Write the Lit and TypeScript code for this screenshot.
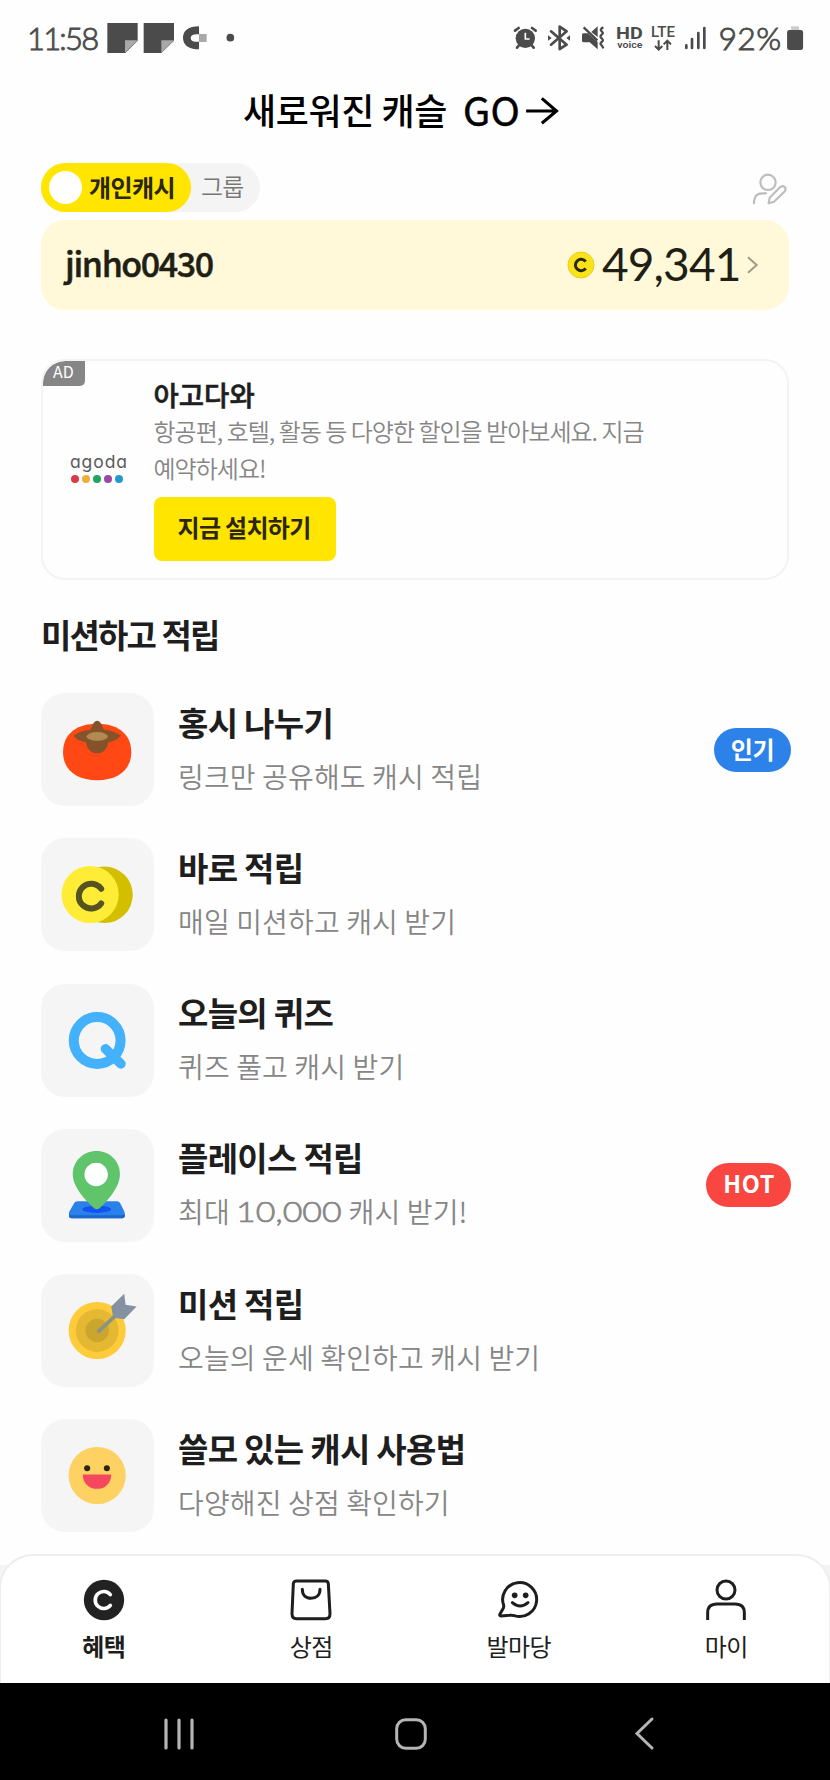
import { LitElement, html, css, svg } from "lit";
import { customElement, property } from "lit/decorators.js";

const ICONS: Record<string, unknown> = {
  persimmon: html`<svg viewBox="124 39 338 338">
    <path d="M292 131C345 131 394 155 394 216C394 272 350 300 292 300C234 300 190 272 190 216C190 155 239 131 292 131Z" fill="#ff4814"/>
    <path d="M292 122C301 122 306 135 312 149C330 150 348 156 363 166C354 178 340 184 325 187C323 207 311 219 292 219C273 219 261 207 259 187C243 184 230 178 221 166C236 156 254 150 272 149C278 135 283 122 292 122Z" fill="#85532a"/>
    <ellipse cx="292" cy="169" rx="32" ry="13" fill="#b08a50"/></svg>`,
  coins: html`<svg viewBox="124 475 338 338">
    <circle cx="314" cy="645" r="84.500" fill="#d3bf00"/><circle cx="271" cy="644" r="85.500" fill="#ffec37"/>
    <path d="M304 627A37 37 0 1 0 304 671" fill="none" stroke="#55531f" stroke-width="18" stroke-linecap="round"/></svg>`,
  quiz: html`<svg viewBox="124 42 338 338">
    <circle cx="292" cy="211" r="70" fill="none" stroke="#43b1fc" stroke-width="30"/>
    <path d="M317 236L363 281" stroke="#43b1fc" stroke-width="29" stroke-linecap="round"/></svg>`,
  place: html`<svg viewBox="124 477 338 338">
    <path d="M233 693H351Q358 693 361 699L374 725V738Q374 744 367 744H215Q208 744 208 738V725L223 699Q226 693 233 693Z" fill="#2b81ea"/>
    <path d="M208 729Q209 735 217 735H366Q373 735 375 729V738Q374 744 367 744H215Q208 744 208 738Z" fill="#1b67cb"/>
    <ellipse cx="291" cy="717" rx="43" ry="11" fill="#1553f0"/>
    <path d="M290 543C329 543 360 573 360 612C360 650 324 690 300 713Q291 721 282 713C256 689 219 650 219 612C219 573 251 543 290 543Z" fill="#5fc46a"/>
    <circle cx="289" cy="613" r="35" fill="#fff"/></svg>`,
  target: html`<svg viewBox="124 42 338 338">
    <circle cx="292" cy="211" r="85.500" fill="#ffcb3b"/><circle cx="292" cy="211" r="64" fill="#e4b832"/><circle cx="292" cy="211" r="35" fill="#cba52e"/>
    <path d="M297 213L345 168" stroke="#8b9282" stroke-width="11" stroke-linecap="round"/>
    <path d="M334 139L373 101L377 134L410 139L373 177L340 173Z" fill="#8391a0"/></svg>`,
  smile: html`<svg viewBox="124 479 338 338">
    <circle cx="292" cy="648" r="85.500" fill="#fdd263"/><circle cx="262" cy="626" r="9" fill="#2c2415"/><circle cx="321" cy="626" r="9" fill="#2c2415"/>
    <path d="M249 645H334C334 672 315 688 292 688C268 688 249 672 249 645Z" fill="#f5475e"/></svg>`,
};

@customElement("mission-row")
class MissionRow extends LitElement {
  @property() icon = "";
  @property() heading = "";
  @property() tag = "";
  @property() tone = "";
  @property({ attribute: false }) note: unknown = "";
  static styles = css`
    :host { display: flex; align-items: center; height: 113px; }
    .tile { width: 113px; height: 113px; border-radius: 24px; background: #f5f5f5; overflow: hidden; flex: none; }
    .tile svg { display: block; width: 100%; height: 100%; }
    .text { flex: 1; padding-left: 24px; white-space: nowrap; }
    .heading { font-size: 33px; line-height: 50px; height: 50px; font-weight: 700; letter-spacing: -0.7px; color: #1e1e1e; margin-top: -1px; }
    .note { font-size: 28px; line-height: 52px; height: 52px; color: #868686; font-weight: 350; letter-spacing: 0.14px; margin-top: 3px; }
    .num { display: inline-block; font-family: Lato; font-weight: 300; -webkit-text-stroke: 0.7px #868686; letter-spacing: 0; width: 108px; transform: scaleX(1.21); transform-origin: 0 50%; height: 52px; vertical-align: top; margin-right: -2px; }
    .tag { height: 44px; border-radius: 22px; padding: 0 17px; margin-right: -2px; color: #fff; font-weight: 700; font-size: 24px; line-height: 41px; letter-spacing: -0.5px; background: #2c82e9; }
    .hot { background: #fa4640; font-size: 23.500px; letter-spacing: 0.6px; padding-right: 16px; }
  `;
  render() {
    return html`<div class="tile">${ICONS[this.icon]}</div>
      <div class="text"><div class="heading">${this.heading}</div><div class="note">${this.note}</div></div>
      ${this.tag ? html`<div class="tag ${this.tone}">${this.tag}</div>` : null}`;
  }
}

const MISSIONS = [
  { icon: "persimmon", heading: "홍시 나누기", note: "링크만 공유해도 캐시 적립", tag: "인기", tone: "" },
  { icon: "coins", heading: "바로 적립", note: "매일 미션하고 캐시 받기", tag: "", tone: "" },
  { icon: "quiz", heading: "오늘의 퀴즈", note: "퀴즈 풀고 캐시 받기", tag: "", tone: "" },
  { icon: "place", heading: "플레이스 적립", note: html`최대 <span class="num">10,000</span> 캐시 받기!`, tag: "HOT", tone: "hot" },
  { icon: "target", heading: "미션 적립", note: "오늘의 운세 확인하고 캐시 받기", tag: "", tone: "" },
  { icon: "smile", heading: "쓸모 있는 캐시 사용법", note: "다양해진 상점 확인하기", tag: "", tone: "" },
];

const TABS = [
  { label: "혜택", icon: svg`<circle cx="63" cy="63" r="60.500" fill="#222"/><path d="M82 47A25.500 25.500 0 1 0 82 79" fill="none" stroke="#fff" stroke-width="11" stroke-linecap="round"/>` },
  { label: "상점", icon: svg`<path d="M20 6H106Q114 6 115 14L120 104Q120 119 106 119H20Q6 119 6 104L10 14Q11 6 20 6Z"/><path d="M37 31C37 48 47 58 63 58C79 58 90 48 90 31" stroke-linecap="round"/>` },
  { label: "발마당", icon: svg`<path d="M17 79A51 51 0 1 1 49 110Q42 108 34 109L10 111Q3 111 6 105L15 89Q18 84 17 79Z" stroke-linejoin="round"/><path d="M43 71Q66 91 90 71" stroke-linecap="round" stroke-width="9"/><circle cx="50" cy="49" r="8.500" fill="#1e1e1e" stroke="none"/><circle cx="83" cy="49" r="8.500" fill="#1e1e1e" stroke="none"/>` },
  { label: "마이", icon: svg`<circle cx="63" cy="33" r="27"/><path d="M8 123V101Q8 75 36 75H90Q118 75 118 101V123"/>` },
];

@customElement("app-root")
class AppRoot extends LitElement {
  static styles = css`
    :host { display: flex; flex-direction: column; width: 830px; height: 1780px; overflow: hidden; background: #fefefe; color: #1e1e1e; font-family: "Noto Sans CJK KR", sans-serif; }
    * { box-sizing: border-box; }
    svg { display: block; flex: none; overflow: visible; }
    .status { height: 76px; flex: none; display: flex; align-items: center; padding: 0 27px 0 27px; color: #4c4c4c; font-family: Lato; }
    .clock { width: 80px; font-size: 31px; font-weight: 300; -webkit-text-stroke: 0.9px #4c4c4c; letter-spacing: -1.8px; white-space: nowrap; line-height: 38px; padding-bottom: 1px; }
    .fill { flex: 1; }
    .pct { width: 68px; margin-left: 12px; font-size: 32px; font-weight: 300; -webkit-text-stroke: 0.9px #4c4c4c; letter-spacing: 0.3px; white-space: nowrap; line-height: 38px; padding-bottom: 1px; }
    .title { height: 70px; flex: none; display: flex; align-items: center; padding-left: 243px; font-size: 36px; font-weight: 500; color: #000; white-space: pre; letter-spacing: -0.4px; line-height: 66px; }
    .title span { padding-bottom: 4px; }
    .go { font-size: 39.500px; font-weight: 400; -webkit-text-stroke: 0.5px #000; letter-spacing: 0.2px; margin-left: 16px; width: 63px; }
    .main { padding: 17px 41px 0; height: 1408px; flex: none; }
    .top { display: flex; justify-content: space-between; align-items: center; height: 49px; }
    .switch { display: flex; width: 219px; height: 49px; border-radius: 25px; background: #f4f4f4; white-space: nowrap; }
    .on { width: 150px; border-radius: 25px; background: #ffe500; display: flex; align-items: center; padding: 0 0 2px 8px; font-size: 24px; font-weight: 700; letter-spacing: -0.6px; color: #2b2608; line-height: 44px; }
    .knob { width: 33px; height: 33px; border-radius: 50%; background: #fff; margin: 2px 7px 0 0; }
    .off { padding-left: 10px; font-size: 24px; line-height: 46px; letter-spacing: -0.9px; color: #777; font-weight: 350; }
    .balance { margin-top: 8px; height: 90px; border-radius: 24px; background: #fff9d9; display: flex; align-items: center; padding: 0 31px 0 24px; color: #1f1f16; }
    .user { flex: 1; font-size: 34px; font-weight: 500; letter-spacing: -1.4px; line-height: 82px; padding-bottom: 4px; -webkit-text-stroke: 0.5px #1f1f16; }
    .amount { font-family: Lato; font-size: 46px; letter-spacing: -0.9px; line-height: 86px; width: 139px; margin: 0 6px 0 7px; padding-bottom: 2px; white-space: nowrap; }
    .ad { margin: 49px 0 0; height: 221px; width: 748px; border: 2px solid #f3f3f3; border-radius: 24px; display: flex; position: relative; overflow: hidden; }
    .adtag { position: absolute; left: 0; top: 0; width: 42px; height: 25px; background: #868686; border-radius: 22px 0 5px 0; color: #fff; font-size: 16px; line-height: 20px; padding-left: 10px; }
    .brand { width: 110.500px; padding: 89px 0 0 27px; }
    .word { font-family: Inter; font-feature-settings: "cv11"; font-size: 17.500px; font-weight: 400; line-height: 24px; color: #5b5b5b; letter-spacing: 0.9px; }
    .dots { display: flex; gap: 3px; padding: 1px 0 0 1px; }
    .dot { width: 8px; height: 8px; border-radius: 50%; }
    .adtext { padding-top: 15px; white-space: nowrap; }
    .adtitle { font-size: 27.500px; font-weight: 500; line-height: 36px; -webkit-text-stroke: 0.6px #1e1e1e; }
    .addesc { font-size: 24px; font-weight: 350; line-height: 37px; color: #868686; letter-spacing: -0.98px; }
    .cta { margin-top: 11px; width: 182px; height: 63.500px; border-radius: 8px; background: #ffe500; color: #2b2608; font-size: 24px; font-weight: 700; letter-spacing: -0.7px; line-height: 60px; padding-left: 24px; }
    .section { margin-top: 29px; height: 50px; font-size: 33px; font-weight: 700; letter-spacing: -1.900px; word-spacing: 1px; line-height: 50px; }
    .list { margin-top: 34px; display: grid; gap: 32.300px; }
    .tabs-back { background: linear-gradient(#fefefe 11px, #f4f4f4 11px); height: 129px; flex: none; }
    .tabs { height: 100%; background: #fff; border: 2px solid #eee; border-bottom: 0; border-radius: 34px 34px 0 0; display: grid; grid-template-columns: repeat(4, 207.500px); padding-top: 23px; margin: 0 -1px; }
    .tab { display: flex; flex-direction: column; align-items: center; font-size: 24px; letter-spacing: -0.5px; line-height: 36px; font-weight: 400; padding-right: 2px; }
    .tab svg { margin-bottom: 7px; }
    .active { font-weight: 700; }
    .system { flex: 1; background: #000; display: flex; align-items: center; padding: 4px 176.500px 0 164px; }
    .home { margin-left: 201px; }
    .back { margin-left: auto; }
  `;
  render() {
    return html`
      <div class="status">
        <div class="clock">11:58</div>
        <svg width="135" height="32" viewBox="321 66 405 96">
          <path d="M322 69H413V122L376 159H322Z M431 69H522V122L484 159H431Z" fill="#4b4b4b"/>
          <path d="M375 121H413L375 158Z M484 121H522L484 158Z" fill="#a9a9a9"/>
          <path d="M597 79V103H589C579 103 572 107 572 113C572 121 579 125 589 125H597V148C565 148 549 134 549 113C549 93 565 79 597 79Z" fill="#4b4b4b"/>
          <rect x="597" y="102" width="23" height="24" fill="#a9a9a9"/><circle cx="691" cy="113" r="11.500" fill="#4b4b4b"/>
        </svg>
        <div class="fill"></div>
        <svg width="193" height="32" viewBox="300 66 579 96" fill="#4b4b4b">
          <circle cx="334" cy="115" r="29"/><path d="M303 92L314 84M365 92L354 84M309 143L317 134M359 143L351 134" stroke="#4b4b4b" stroke-width="8" stroke-linecap="round"/>
          <path d="M334 98V117H347" fill="none" stroke="#fff" stroke-width="5"/>
          <path d="M411 94L458 134L437 147V80L458 94L411 134" fill="none" stroke="#4b4b4b" stroke-width="8" stroke-linejoin="round" stroke-linecap="round"/>
          <path d="M402 106L413 114L402 122Z M468 106L457 114L468 122Z"/>
          <path d="M504 104Q504 100 509 100H522L551 126V148L527 127H509Q504 127 504 122Z M551 79V111L532 96Z"/>
          <path d="M509 82L550 121" stroke="#4b4b4b" stroke-width="7"/>
          <path d="M568 82Q556 89 563 94Q570 99 563 104Q556 109 563 115Q570 121 563 126Q556 131 563 136Q566 140 568 145" fill="none" stroke="#4b4b4b" stroke-width="7"/>
          <g font-family="Roboto" stroke="none">
            <text x="606" y="118" font-size="48" font-weight="700" textLength="80" lengthAdjust="spacingAndGlyphs">HD</text>
            <text x="610" y="144" font-size="29" font-weight="600" textLength="75" lengthAdjust="spacingAndGlyphs">voice</text>
            <text x="711" y="112" font-size="45" font-weight="500" textLength="72" lengthAdjust="spacingAndGlyphs">LTE</text>
          </g>
          <path d="M734 121V148M723 138L734 149L745 138M760 150V122M749 133L760 122L771 133" fill="none" stroke="#4b4b4b" stroke-width="6"/>
          <path d="M817 136V144M834 117V144M853 99V144M871 84V144" stroke="#4b4b4b" stroke-width="8" stroke-linecap="round"/>
        </svg>
        <div class="pct">92%</div>
        <svg width="16.500" height="24" viewBox="1116 78 49 72"><path d="M1128 79H1152V91H1128Z" fill="#ccc"/><rect x="1116" y="90" width="48" height="60" rx="7" fill="#4b4b4b"/></svg>
      </div>
      <div class="title"><span>새로워진 캐슬</span><span class="go">GO</span><svg width="33" height="28" viewBox="335 290 96 82"><path d="M335 331H424M381 294L424 331L381 367" fill="none" stroke="#000" stroke-width="9"/></svg></div>
      <div class="main">
        <div class="top">
          <div class="switch"><div class="on"><div class="knob"></div>개인캐시</div><div class="off">그룹</div></div>
          <svg width="36" height="32" viewBox="1014 65 108 96" fill="none" stroke="#bdbdbd" stroke-width="6.500" stroke-linecap="round" stroke-linejoin="round"><circle cx="1059" cy="96" r="23"/><path d="M1017 159V153Q1019 129 1042 129H1053M1061 159L1064 142L1095 111Q1103 104 1109 110Q1115 116 1108 124L1077 154Z"/></svg>
        </div>
        <div class="balance">
          <div class="user">jinho0430</div>
          <svg width="28" height="28" viewBox="458 303 84 84"><circle cx="500" cy="345" r="39" fill="#fbe31a" stroke="#e9cf1b" stroke-width="3"/><path d="M514 335A17 17 0 1 0 514 355" fill="none" stroke="#2a2811" stroke-width="9"/></svg>
          <div class="amount">49,341</div>
          <svg width="11" height="18" viewBox="996 318 33 54"><path d="M999 322L1025 345L999 368" fill="none" stroke="#9d9a87" stroke-width="6"/></svg>
        </div>
        <div class="ad">
          <div class="adtag">AD</div>
          <div class="brand"><div class="word">agoda</div><div class="dots">${["#dc3a46", "#eab03b", "#22a35f", "#9a48a3", "#2499cc"].map((c) => html`<div class="dot" style="background:${c}"></div>`)}</div></div>
          <div class="adtext">
            <div class="adtitle">아고다와</div>
            <div class="addesc">항공편, 호텔, 활동 등 다양한 할인을 받아보세요. 지금<br>예약하세요!</div>
            <div class="cta">지금 설치하기</div>
          </div>
        </div>
        <div class="section">미션하고 적립</div>
        <div class="list">${MISSIONS.map((m) => html`<mission-row .icon=${m.icon} .heading=${m.heading} .note=${m.note} .tag=${m.tag} .tone=${m.tone}></mission-row>`)}</div>
      </div>
      <div class="tabs-back"><div class="tabs">${TABS.map((t, i) => html`<div class="tab ${i === 0 ? "active" : ""}"><svg width="42" height="42" viewBox="0 0 126 126" fill="none" stroke="#1e1e1e" stroke-width="9">${i === 0 ? svg`<g stroke="none">${t.icon}</g>` : t.icon}</svg>${t.label}</div>`)}</div></div>
      <div class="system">
        <svg width="30" height="32" viewBox="0 0 30 32"><path d="M2 2V30M15 2V30M28 2V30" stroke="#b5b5b5" stroke-width="3.200" stroke-linecap="round"/></svg>
        <svg class="home" width="32" height="32" viewBox="0 0 32 32"><rect x="1.700" y="1.700" width="28.600" height="28.600" rx="9" fill="none" stroke="#b5b5b5" stroke-width="3"/></svg>
        <svg class="back" width="19" height="33" viewBox="0 0 19 33"><path d="M17 2L2 16.500L17 31" fill="none" stroke="#b5b5b5" stroke-width="3" stroke-linecap="round"/></svg>
      </div>`;
  }
}
